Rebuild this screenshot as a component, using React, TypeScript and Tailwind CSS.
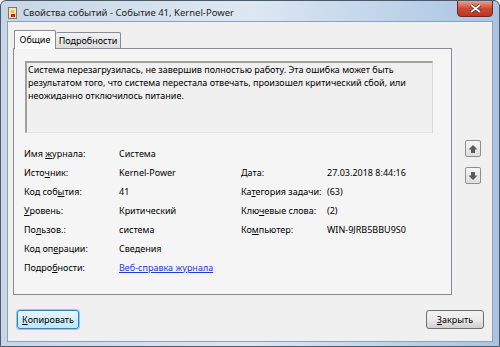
import React from "react";

const font = { fontFamily: '"Noto Sans", Lato, sans-serif' };

function U({ t, i }: { t: string; i: number }) {
  return (
    <>
      {t.slice(0, i)}
      <span className="underline underline-offset-1">{t[i]}</span>
      {t.slice(i + 1)}
    </>
  );
}

function Row({ l, li, v, link }: { l: string; li: number; v: string; link?: boolean }) {
  return (
    <div className="flex h-[19px] items-center whitespace-nowrap">
      <div className="w-[95px] shrink-0">
        <U t={l} i={li} />
      </div>
      {link ? (
        <span className="text-[#1f3ad8] underline">{v}</span>
      ) : (
        <span>{v}</span>
      )}
    </div>
  );
}

function RRow({ l, li, v }: { l: string; li: number; v: string }) {
  return (
    <div className="flex h-[19px] items-center whitespace-nowrap">
      <div className="w-[86px] shrink-0">
        <U t={l} i={li} />
      </div>
      <span>{v}</span>
    </div>
  );
}

function ArrowBtn({ up }: { up?: boolean }) {
  return (
    <div className="w-[16px] h-[17px] border border-[#8e8f8f] rounded-[2px] bg-gradient-to-b from-[#f6f6f6] to-[#dedede] flex items-center justify-center">
      <svg width="10" height="10" viewBox="0 0 10 10" className={up ? "" : "rotate-180"}>
        <path d="M5 1 L9.5 5.5 L7 5.5 L7 9 L3 9 L3 5.5 L0.5 5.5 Z" fill="#5a5a5a" />
      </svg>
    </div>
  );
}

export default function App() {
  return (
    <div
      className="w-[500px] h-[347px] relative overflow-hidden border border-[#4a5a6a] rounded-t-[6px] bg-gradient-to-r from-[#c7d6e6] via-[#dde8f3] to-[#a9c4e2] flex flex-col text-[9px] text-black"
      style={font}
    >
      {/* Title bar */}
      <div className="h-[20px] shrink-0 flex items-start relative">
        <div className="ml-[7px] mt-[6px] w-[9px] h-[12px] bg-[#e8e4d4] border border-[#807860] flex flex-col items-center justify-center gap-[1px]">
          <div className="w-[3px] h-[3px] bg-[#f0c020]" />
          <div className="w-[4px] h-[3px] bg-[#d02020]" />
        </div>
        <div className="ml-[6px] mt-[4px] text-[9.5px] text-[#1e1e1e] leading-[16px]">
          Свойства событий - Событие 41, Kernel-Power
        </div>
        <div className="absolute right-[6px] top-[-1px] w-[36px] h-[17px] rounded-b-[4px] border border-[#6b2a20] bg-gradient-to-b from-[#e9a08e] via-[#c94a34] to-[#c2341c] flex items-center justify-center">
          <svg width="11" height="9" viewBox="0 0 11 9">
            <path d="M1 1 L10 8 M10 1 L1 8" stroke="#3a1a14" strokeWidth="3" />
            <path d="M1 1 L10 8 M10 1 L1 8" stroke="#ffffff" strokeWidth="1.8" />
          </svg>
        </div>
      </div>
      {/* Client */}
      <div className="mx-[6px] mb-[6px] flex-1 border border-[#8ca0b8] bg-[#f0f0f0] flex flex-col">
        <div className="flex flex-1 pl-[5px] pr-[11px]">
          <div className="w-[439px] flex flex-col pt-[7px]">
            {/* Tabs */}
            <div className="flex items-end h-[19px] relative z-10 pl-[1px]">
              <div className="h-[19px] w-[42px] bg-[#fbfbfb] border border-b-0 border-[#898c95] rounded-t-[2px] flex items-center justify-center -mb-[1px] pb-[1px]">
                Общие
              </div>
              <div className="h-[16px] w-[65px] bg-gradient-to-b from-[#f2f2f2] to-[#dcdcdc] border border-l-0 border-b-0 border-[#898c95] rounded-t-[2px] flex items-center justify-center">
                Подробности
              </div>
            </div>
            {/* Panel */}
            <div className="h-[247px] border border-[#898c95] bg-[#f5f5f5] px-[10px] pt-[12px]">
              <div className="h-[72px] w-[408px] ml-[1px] border border-t-[2px] border-l-[2px] border-[#a0a0a0] border-b-[#e4e4e4] border-r-[#dadada] px-[1px] leading-[13px] bg-[#f0f0f0]">
                Система перезагрузилась, не завершив полностью работу. Эта ошибка может быть результатом того, что система перестала отвечать, произошел критический сбой, или неожиданно отключилось питание.
              </div>
              <div className="flex mt-[11px]">
                <div className="w-[217px] flex flex-col">
                  <Row l="Имя журнала:" li={4} v="Система" />
                  <Row l="Источник:" li={4} v="Kernel-Power" />
                  <Row l="Код события:" li={7} v="41" />
                  <Row l="Уровень:" li={0} v="Критический" />
                  <Row l="Пользов.:" li={2} v="система" />
                  <Row l="Код операции:" li={6} v="Сведения" />
                  <Row l="Подробности:" li={5} v="Веб-справка журнала" link />
                </div>
                <div className="flex flex-col pt-[19px]">
                  <RRow l="Дата:" li={0} v="27.03.2018 8:44:16" />
                  <RRow l="Категория задачи:" li={2} v="(63)" />
                  <RRow l="Ключевые слова:" li={3} v="(2)" />
                  <RRow l="Компьютер:" li={2} v="WIN-9JRB5BBU9S0" />
                </div>
              </div>
            </div>
          </div>
          <div className="flex-1 flex flex-col items-end pt-[118px] gap-[10px]">
            <ArrowBtn up />
            <ArrowBtn />
          </div>
        </div>
        {/* Buttons */}
        <div className="h-[46px] shrink-0 flex justify-between items-start pt-[15px] px-[9px] pr-[8px]">
          <div className="h-[19px] w-[62px] rounded-[3px] border border-[#3c7fb1] shadow-[0_0_0_1px_#7fd0f5] bg-gradient-to-b from-[#eaf6fd] to-[#bee6fd] flex items-center justify-center">
            <U t="Копировать" i={0} />
          </div>
          <div className="h-[19px] w-[58px] rounded-[3px] border border-[#707070] bg-gradient-to-b from-[#f2f2f2] via-[#ebebeb] to-[#cfcfcf] flex items-center justify-center">
            <U t="Закрыть" i={0} />
          </div>
        </div>
      </div>
    </div>
  );
}
